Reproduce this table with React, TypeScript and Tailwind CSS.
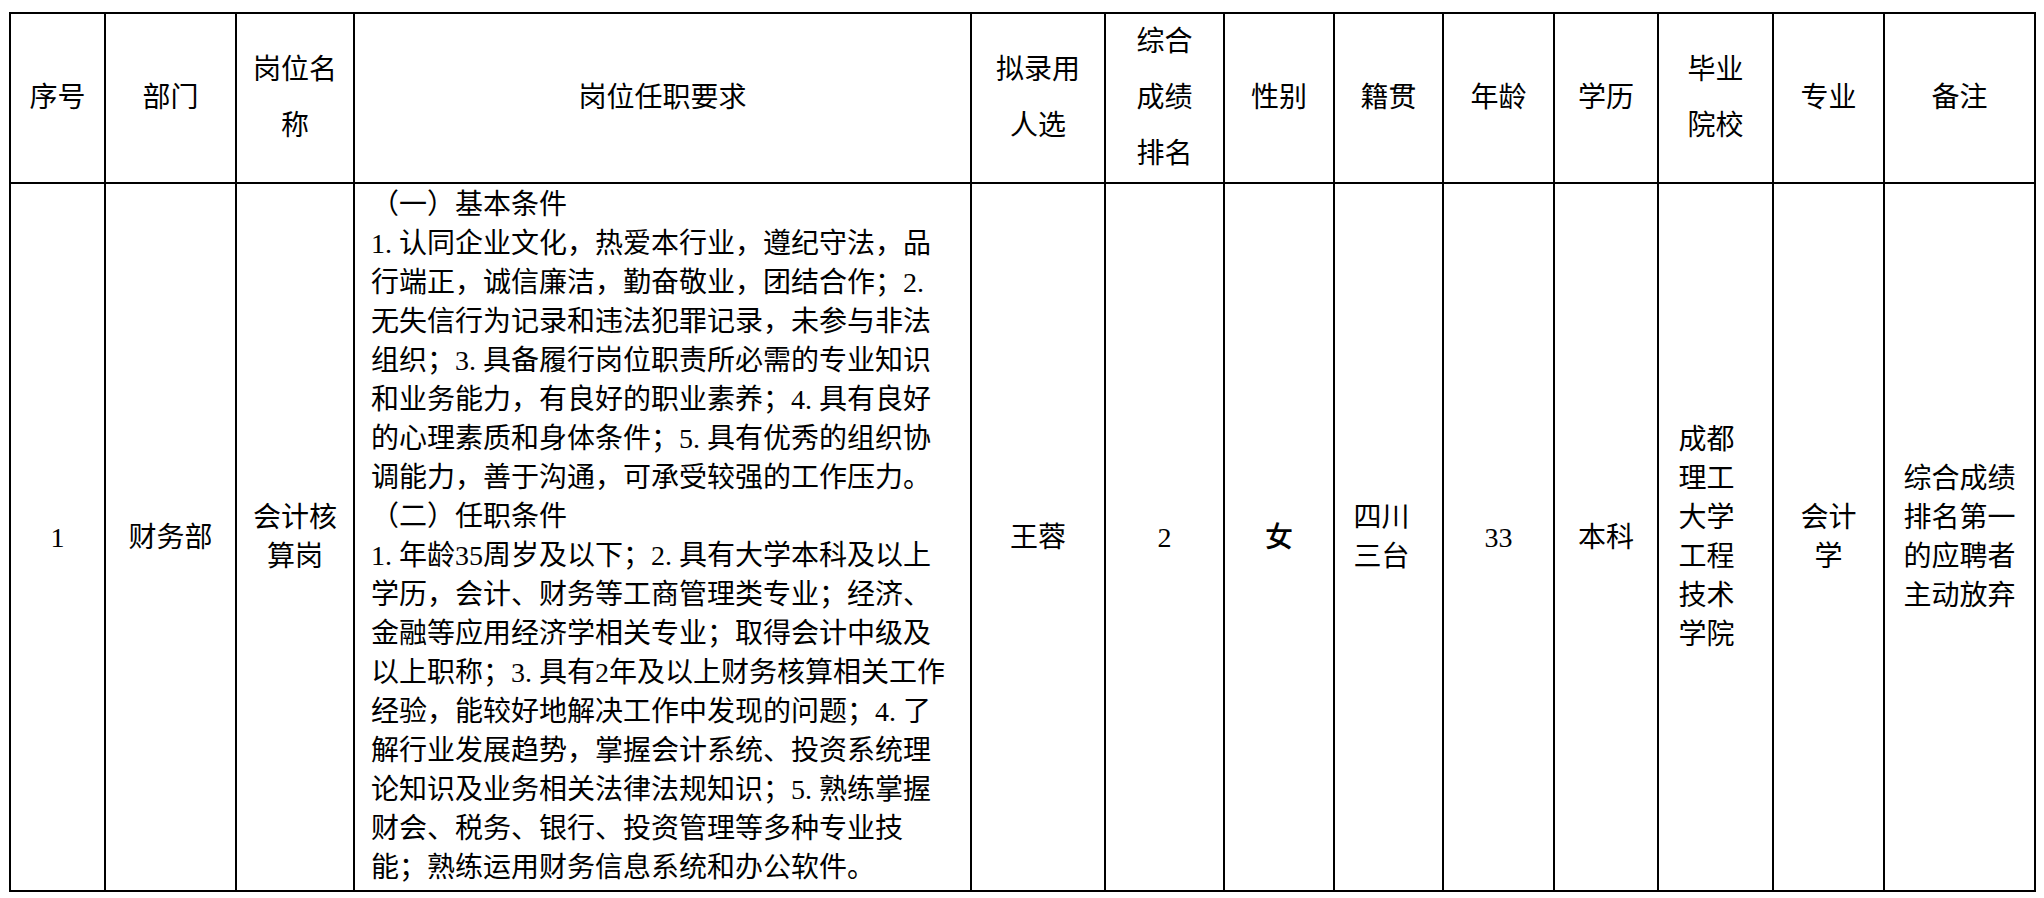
const headers: { lines: string[] }[] = [
  { lines: ["序号"] },
  { lines: ["部门"] },
  { lines: ["岗位名", "称"] },
  { lines: ["岗位任职要求"] },
  { lines: ["拟录用", "人选"] },
  { lines: ["综合", "成绩", "排名"] },
  { lines: ["性别"] },
  { lines: ["籍贯"] },
  { lines: ["年龄"] },
  { lines: ["学历"] },
  { lines: ["毕业", "院校"] },
  { lines: ["专业"] },
  { lines: ["备注"] },
];

const colWidths = [
  "w-[95px]",
  "w-[131px]",
  "w-[118px]",
  "w-[617px]",
  "w-[134px]",
  "w-[119px]",
  "w-[110px]",
  "w-[109px]",
  "w-[111px]",
  "w-[104px]",
  "w-[115px]",
  "w-[111px]",
  "w-[151px]",
];

const requirements = [
  "（一）基本条件",
  "1.认同企业文化，热爱本行业，遵纪守法，品",
  "行端正，诚信廉洁，勤奋敬业，团结合作；2.",
  "无失信行为记录和违法犯罪记录，未参与非法",
  "组织；3.具备履行岗位职责所必需的专业知识",
  "和业务能力，有良好的职业素养；4.具有良好",
  "的心理素质和身体条件；5.具有优秀的组织协",
  "调能力，善于沟通，可承受较强的工作压力。",
  "（二）任职条件",
  "1.年龄35周岁及以下；2.具有大学本科及以上",
  "学历，会计、财务等工商管理类专业；经济、",
  "金融等应用经济学相关专业；取得会计中级及",
  "以上职称；3.具有2年及以上财务核算相关工作",
  "经验，能较好地解决工作中发现的问题；4.了",
  "解行业发展趋势，掌握会计系统、投资系统理",
  "论知识及业务相关法律法规知识；5.熟练掌握",
  "财会、税务、银行、投资管理等多种专业技",
  "能；熟练运用财务信息系统和办公软件。",
];

const Lines = ({ lines }: { lines: string[] }) => (
  <>
    {lines.map((l, i) => (
      <div key={i} className="whitespace-nowrap">
        {l}
      </div>
    ))}
  </>
);

// the source used half-width periods as wide as a digit, so pad them out
const ReqLine = ({ text }: { text: string }) => {
  const parts = text.split(".");
  return (
    <div className="whitespace-nowrap">
      {parts.map((p, i) => (
        <span key={i}>
          {p}
          {i < parts.length - 1 && <span className="pr-[7px]">.</span>}
        </span>
      ))}
    </div>
  );
};

const cell = "border-2 border-black text-center align-middle p-0";

const App = () => {
  return (
    <div
      className="w-[2044px] h-[898px] bg-white text-black overflow-hidden pt-[12px] pl-[9px] [text-spacing-trim:space-all]"
      style={{ fontFamily: '"Liberation Serif", "Noto Sans CJK SC", serif' }}
    >
      <table className="w-[2027px] table-fixed border-collapse border-2 border-black text-[28px]">
        <colgroup>
          {colWidths.map((w, i) => (
            <col key={i} className={w} />
          ))}
        </colgroup>
        <thead>
          <tr className="h-[170px]">
            {headers.map((h, i) => (
              <th key={i} className={`${cell} font-normal leading-[56px]`}>
                <Lines lines={h.lines} />
              </th>
            ))}
          </tr>
        </thead>
        <tbody className="leading-[39px]">
          <tr className="h-[708px]">
            <td className={cell}>1</td>
            <td className={cell}>财务部</td>
            <td className={cell}>
              <Lines lines={["会计核", "算岗"]} />
            </td>
            <td className="border-2 border-black align-top pt-[1px] pl-[16px] text-left">
              {requirements.map((r, i) => (
                <ReqLine key={i} text={r} />
              ))}
            </td>
            <td className={cell}>王蓉</td>
            <td className={cell}>2</td>
            <td className={`${cell} font-medium`}>女</td>
            <td className={`${cell} pr-[14px]`}>
              <Lines lines={["四川", "三台"]} />
            </td>
            <td className={cell}>33</td>
            <td className={cell}>本科</td>
            <td className={`${cell} pr-[18px]`}>
              <Lines lines={["成都", "理工", "大学", "工程", "技术", "学院"]} />
            </td>
            <td className={cell}>
              <Lines lines={["会计", "学"]} />
            </td>
            <td className={cell}>
              <Lines lines={["综合成绩", "排名第一", "的应聘者", "主动放弃"]} />
            </td>
          </tr>
        </tbody>
      </table>
    </div>
  );
};

export default App;
